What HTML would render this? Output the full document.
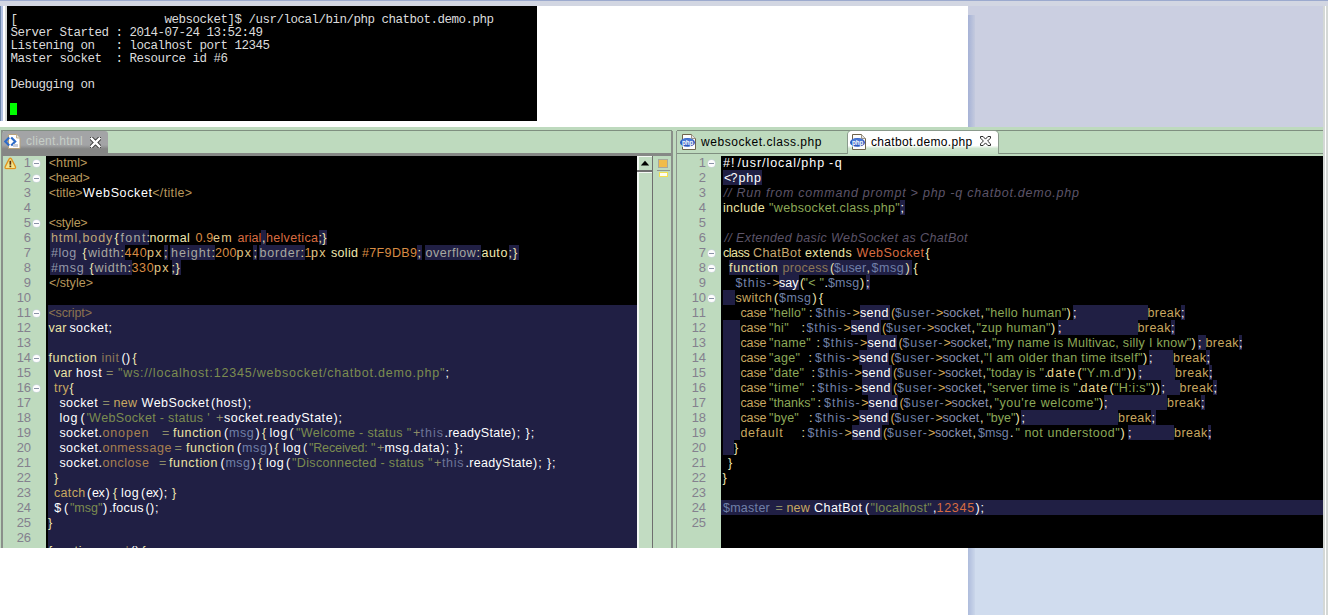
<!DOCTYPE html>
<html lang="en">
<head>
<meta charset="utf-8">
<title>WebSocket chatbot demo</title>
<style>
html,body{margin:0;padding:0}
body{width:1328px;height:615px;position:relative;overflow:hidden;background:#fff;font-family:"Liberation Sans",sans-serif;font-kerning:none}
.a,.t,.ln,.nv,.fold,i{position:absolute;display:block}
/* backdrop */
#lav1{left:968px;top:0;width:360px;height:127px;background:#cbcfe1}
#lav2{left:968px;top:548px;width:360px;height:67px;background:#d0dcee}
.shadow{left:968px;width:7px;background:linear-gradient(90deg,#a6b2d6,#c4cade)}
#topstrip{left:0;top:0;width:1328px;height:6px;background:#d2d6e2}
#topline{left:0;top:0;width:1328px;height:1px;background:#9caace}
#ls0{left:0;top:6px;width:1px;height:115px;background:#6c86aa}
#ls1{left:1px;top:6px;width:2px;height:115px;background:#b4c2e2}
#ls3{left:5px;top:6px;width:2px;height:115px;background:#d8dad8}
#redge{left:1323px;top:6px;width:5px;height:609px;background:#d4d8d6}
#redge2{left:1325px;top:6px;width:1px;height:609px;background:#fff}
/* terminal */
#term{left:7px;top:6px;width:530px;height:115px;background:#000;overflow:hidden}
#term pre{position:absolute;left:3.5px;top:7.5px;margin:0;font-family:"Liberation Mono",monospace;font-size:12.5px;line-height:13px;letter-spacing:-0.5px;color:#dcdcdc;white-space:pre}
#cursor{left:3px;top:97px;width:7px;height:12px;background:#00ff00}
/* eclipse */
#ecl{left:0;top:127px;width:1328px;height:421px;background:#bedabe;overflow:hidden}
#ecl .wrap{position:absolute;left:0;top:-127px;width:1328px;height:615px}
.code{background:#000;overflow:hidden}
.t{font-size:12.5px;line-height:15px;height:15px;white-space:pre}
.ln{font-size:13px;line-height:15px;height:15px;width:30px;text-align:right;color:#84808e;letter-spacing:-0.1px}
.nv{height:15px;background:#201f44}
.fold{width:7px;height:7px;border-radius:50%;background:#fdfdfd;box-shadow:0 0 0 0.5px #cfd6e6}
.fold:after{content:"";position:absolute;left:1px;top:3px;width:5px;height:1px;background:#8a93a8}
.tabtxt{font-size:12px;line-height:14px;white-space:pre;color:#000}
</style>
</head>
<body>
<i id="lav1"></i><i id="lav2"></i>
<i class="shadow" style="top:15px;height:112px"></i>
<i class="shadow" style="top:548px;height:67px;background:linear-gradient(90deg,#aebcdc,#cad6ea)"></i>
<i id="topstrip"></i><i id="topline"></i>
<i id="ls0"></i><i id="ls1"></i><i id="ls3"></i>
<div id="term" class="a"><pre>[                     websocket]$ /usr/local/bin/php chatbot.demo.php
Server Started : 2014-07-24 13:52:49
Listening on   : localhost port 12345
Master socket  : Resource id #6

Debugging on</pre><i id="cursor"></i></div>

<div id="ecl" class="a"><div class="wrap">
<!-- ===== left pane chrome ===== -->
<i style="left:1px;top:130px;width:2px;height:418px;background:#8a8f8a"></i>
<i style="left:3px;top:130px;width:669px;height:1px;background:#7f8f80"></i>
<i style="left:671px;top:131px;width:2px;height:417px;background:#8a908a"></i>
<i style="left:3px;top:153px;width:668px;height:3px;background:#868886"></i>
<!-- tab client.html -->
<i style="left:2px;top:131px;width:106px;height:17px;background:#a3a4a6;border-radius:3px 3px 0 0"></i>
<i style="left:2px;top:145px;width:106px;height:11px;background:linear-gradient(#a3a4a6 0,#858685 35%,#858685 100%)"></i>
<svg class="a" style="left:4px;top:133px" width="18" height="17" viewBox="0 0 18 17">
 <path d="M4.5 1.5h8l3.5 3.5v10.5h-11.5z" fill="#fff" stroke="#b9a27a" stroke-width="1"/>
 <path d="M12.5 1.5v3.5h3.5" fill="#e8e8e8" stroke="#b9a27a" stroke-width="0.8"/>
 <path d="M5.2 4.5 1.2 8.5l4 4M7.2 4.5l4 4-4 4" fill="none" stroke="#2e6cc8" stroke-width="2.2"/>
 <rect x="9" y="11" width="5" height="3" fill="#c8ccd8"/>
</svg>
<span class="a tabtxt" style="left:26px;top:134px;color:#c6cec6;letter-spacing:0.27px">client.html</span>
<svg class="a" style="left:90px;top:136.5px" width="11" height="11" viewBox="0 0 12 12">
 <path d="M1.6 1.6 10.4 10.4M10.4 1.6 1.6 10.4" stroke="#303030" stroke-width="4.6" stroke-linecap="square"/>
 <path d="M1.8 1.8 10.2 10.2M10.2 1.8 1.8 10.2" stroke="#fff" stroke-width="2.7" stroke-linecap="square"/>
</svg>
<!-- left code area -->
<div class="a code" style="left:46px;top:156px;width:591px;height:392px"></div>
<i class="nv" style="left:48px;top:305px;width:589px;height:243px"></i>
<i class="nv" style="left:50.0px;top:230px;width:99.0px"></i>
<i class="nv" style="left:261.0px;top:230px;width:5.0px"></i>
<i class="nv" style="left:318.5px;top:230px;width:8.5px"></i>
<i class="nv" style="left:50.0px;top:245px;width:74.5px"></i>
<i class="nv" style="left:164.0px;top:245px;width:4.0px"></i>
<i class="nv" style="left:170.0px;top:245px;width:45.0px"></i>
<i class="nv" style="left:253.0px;top:245px;width:4.0px"></i>
<i class="nv" style="left:259.0px;top:245px;width:45.5px"></i>
<i class="nv" style="left:417.0px;top:245px;width:5.0px"></i>
<i class="nv" style="left:425.0px;top:245px;width:55.5px"></i>
<i class="nv" style="left:508.5px;top:245px;width:10.5px"></i>
<i class="nv" style="left:50.0px;top:260px;width:81.5px"></i>
<i class="nv" style="left:171.5px;top:260px;width:9.0px"></i>
<span class="ln" style="left:1px;top:155px">1</span>
<span class="ln" style="left:1px;top:170px">2</span>
<span class="ln" style="left:1px;top:185px">3</span>
<span class="ln" style="left:1px;top:200px">4</span>
<span class="ln" style="left:1px;top:215px">5</span>
<span class="ln" style="left:1px;top:230px">6</span>
<span class="ln" style="left:1px;top:245px">7</span>
<span class="ln" style="left:1px;top:260px">8</span>
<span class="ln" style="left:1px;top:275px">9</span>
<span class="ln" style="left:1px;top:290px">10</span>
<span class="ln" style="left:1px;top:305px">11</span>
<span class="ln" style="left:1px;top:320px">12</span>
<span class="ln" style="left:1px;top:335px">13</span>
<span class="ln" style="left:1px;top:350px">14</span>
<span class="ln" style="left:1px;top:365px">15</span>
<span class="ln" style="left:1px;top:380px">16</span>
<span class="ln" style="left:1px;top:395px">17</span>
<span class="ln" style="left:1px;top:410px">18</span>
<span class="ln" style="left:1px;top:425px">19</span>
<span class="ln" style="left:1px;top:440px">20</span>
<span class="ln" style="left:1px;top:455px">21</span>
<span class="ln" style="left:1px;top:470px">22</span>
<span class="ln" style="left:1px;top:485px">23</span>
<span class="ln" style="left:1px;top:500px">24</span>
<span class="ln" style="left:1px;top:515px">25</span>
<span class="ln" style="left:1px;top:530px">26</span>
<span class="ln" style="left:1px;top:545px">27</span>
<i class="fold" style="left:33.0px;top:160.0px"></i>
<i class="fold" style="left:33.0px;top:175.0px"></i>
<i class="fold" style="left:33.0px;top:220.0px"></i>
<i class="fold" style="left:33.0px;top:310.0px"></i>
<i class="fold" style="left:33.0px;top:355.0px"></i>
<i class="fold" style="left:33.0px;top:385.0px"></i>
<!-- warning icon -->
<svg class="a" style="left:4px;top:157px" width="13" height="13" viewBox="0 0 13 13">
 <path d="M5.2 1.9Q6.3 0.6 7.4 1.9L11.4 9.6Q12 11.6 10.2 11.6H2.4Q0.6 11.6 1.2 9.6Z" fill="#fff" opacity="0.7" transform="translate(0,0.7)"/>
 <path d="M5.2 1.9Q6.3 0.6 7.4 1.9L11.4 9.6Q12 11.6 10.2 11.6H2.4Q0.6 11.6 1.2 9.6Z" fill="#f2e48c" stroke="#e0921e" stroke-width="1.3" stroke-linejoin="round"/>
 <rect x="5.5" y="3.8" width="1.7" height="3.9" fill="#5c2c08"/><rect x="5.5" y="8.5" width="1.7" height="1.7" fill="#5c2c08"/>
</svg>
<span class="t" style="left:48.7px;top:156px;color:#b8985c;letter-spacing:0.10px">&lt;html&gt;</span>
<span class="t" style="left:48.7px;top:171px;color:#b8985c;letter-spacing:-0.25px">&lt;head&gt;</span>
<span class="t" style="left:48.7px;top:186px;color:#b8985c;letter-spacing:-0.02px">&lt;title&gt;</span>
<span class="t" style="left:83.1px;top:186px;color:#ffffff;letter-spacing:0.62px">WebSocket</span>
<span class="t" style="left:152.2px;top:186px;color:#b8985c;letter-spacing:0.35px">&lt;/title&gt;</span>
<span class="t" style="left:48.7px;top:216px;color:#b8985c;letter-spacing:-0.22px">&lt;style&gt;</span>
<span class="t" style="left:50.9px;top:231px;color:#c0a878;letter-spacing:0.90px">html,body</span>
<span class="t" style="left:114.4px;top:231px;color:#f0e8b0;letter-spacing:0.00px">{</span>
<span class="t" style="left:120.4px;top:231px;color:#a8a8a0;letter-spacing:1.40px">font</span>
<span class="t" style="left:146.4px;top:231px;color:#f0e8b0;letter-spacing:0.00px">:</span>
<span class="t" style="left:149.4px;top:231px;color:#f0e8b0;letter-spacing:0.46px">normal</span>
<span class="t" style="left:195.4px;top:231px;color:#d88c44;letter-spacing:0.20px">0.9</span>
<span class="t" style="left:212.9px;top:231px;color:#e0c888;letter-spacing:1.40px">em</span>
<span class="t" style="left:237.4px;top:231px;color:#d86c40;letter-spacing:0.07px">arial</span>
<span class="t" style="left:261.9px;top:231px;color:#f0e8b0;letter-spacing:0.00px">,</span>
<span class="t" style="left:265.9px;top:231px;color:#d86c40;letter-spacing:0.35px">helvetica</span>
<span class="t" style="left:318.4px;top:231px;color:#f0e8b0;letter-spacing:0.42px">;}</span>
<span class="t" style="left:50.9px;top:246px;color:#9498a8;letter-spacing:0.59px">#log</span>
<span class="t" style="left:82.4px;top:246px;color:#f0e8b0;letter-spacing:0.00px">{</span>
<span class="t" style="left:87.9px;top:246px;color:#a8a8a0;letter-spacing:0.66px">width</span>
<span class="t" style="left:120.4px;top:246px;color:#f0e8b0;letter-spacing:0.00px">:</span>
<span class="t" style="left:124.4px;top:246px;color:#d88c44;letter-spacing:0.71px">440</span>
<span class="t" style="left:146.9px;top:246px;color:#e0c888;letter-spacing:1.40px">px</span>
<span class="t" style="left:163.9px;top:246px;color:#f0e8b0;letter-spacing:0.00px">;</span>
<span class="t" style="left:170.9px;top:246px;color:#a8a8a0;letter-spacing:1.07px">height</span>
<span class="t" style="left:211.4px;top:246px;color:#f0e8b0;letter-spacing:0.00px">:</span>
<span class="t" style="left:214.9px;top:246px;color:#d88c44;letter-spacing:0.38px">200</span>
<span class="t" style="left:236.4px;top:246px;color:#e0c888;letter-spacing:1.40px">px</span>
<span class="t" style="left:253.4px;top:246px;color:#f0e8b0;letter-spacing:0.00px">;</span>
<span class="t" style="left:259.4px;top:246px;color:#a8a8a0;letter-spacing:0.81px">border</span>
<span class="t" style="left:300.4px;top:246px;color:#f0e8b0;letter-spacing:0.00px">:</span>
<span class="t" style="left:304.4px;top:246px;color:#d88c44;letter-spacing:0.00px">1</span>
<span class="t" style="left:310.9px;top:246px;color:#e0c888;letter-spacing:1.40px">px</span>
<span class="t" style="left:330.9px;top:246px;color:#f0e8b0;letter-spacing:0.36px">solid</span>
<span class="t" style="left:361.9px;top:246px;color:#d88c44;letter-spacing:0.38px">#7F9DB9</span>
<span class="t" style="left:417.4px;top:246px;color:#f0e8b0;letter-spacing:0.00px">;</span>
<span class="t" style="left:425.4px;top:246px;color:#a8a8a0;letter-spacing:0.56px">overflow</span>
<span class="t" style="left:476.4px;top:246px;color:#f0e8b0;letter-spacing:0.00px">:</span>
<span class="t" style="left:481.4px;top:246px;color:#f0e8b0;letter-spacing:0.54px">auto</span>
<span class="t" style="left:508.4px;top:246px;color:#f0e8b0;letter-spacing:1.17px">;}</span>
<span class="t" style="left:50.9px;top:261px;color:#9498a8;letter-spacing:0.73px">#msg</span>
<span class="t" style="left:89.4px;top:261px;color:#f0e8b0;letter-spacing:0.00px">{</span>
<span class="t" style="left:94.4px;top:261px;color:#a8a8a0;letter-spacing:0.76px">width</span>
<span class="t" style="left:127.4px;top:261px;color:#f0e8b0;letter-spacing:0.00px">:</span>
<span class="t" style="left:131.4px;top:261px;color:#d88c44;letter-spacing:0.71px">330</span>
<span class="t" style="left:153.9px;top:261px;color:#e0c888;letter-spacing:1.40px">px</span>
<span class="t" style="left:171.4px;top:261px;color:#f0e8b0;letter-spacing:0.67px">;}</span>
<span class="t" style="left:48.9px;top:276px;color:#b8985c;letter-spacing:0.05px">&lt;/style&gt;</span>
<span class="t" style="left:48.4px;top:306px;color:#8c7450;letter-spacing:-0.12px">&lt;script&gt;</span>
<span class="t" style="left:48.4px;top:321px;color:#ece4a4;letter-spacing:0.38px">var</span>
<span class="t" style="left:69.4px;top:321px;color:#ffffff;letter-spacing:0.48px">socket</span>
<span class="t" style="left:108.4px;top:321px;color:#ffffff;letter-spacing:0.00px">;</span>
<span class="t" style="left:48.4px;top:351px;color:#ece4a4;letter-spacing:0.65px">function</span>
<span class="t" style="left:101.4px;top:351px;color:#8c7858;letter-spacing:0.50px">init</span>
<span class="t" style="left:121.4px;top:351px;color:#ffffff;letter-spacing:0.34px">()</span>
<span class="t" style="left:132.4px;top:351px;color:#f0e8b0;letter-spacing:0.00px">{</span>
<span class="t" style="left:53.9px;top:366px;color:#ece4a4;letter-spacing:0.38px">var</span>
<span class="t" style="left:75.9px;top:366px;color:#ffffff;letter-spacing:0.71px">host</span>
<span class="t" style="left:105.9px;top:366px;color:#8c8c68;letter-spacing:0.00px">=</span>
<span class="t" style="left:117.9px;top:366px;color:#7c8c50;letter-spacing:0.80px">&quot;ws://localhost:12345/websocket/chatbot.demo.php&quot;</span>
<span class="t" style="left:445.4px;top:366px;color:#ffffff;letter-spacing:0.00px">;</span>
<span class="t" style="left:53.9px;top:381px;color:#c8a860;letter-spacing:0.54px">try</span>
<span class="t" style="left:69.4px;top:381px;color:#f0e8b0;letter-spacing:0.00px">{</span>
<span class="t" style="left:59.4px;top:396px;color:#ffffff;letter-spacing:0.43px">socket</span>
<span class="t" style="left:102.4px;top:396px;color:#8c8c68;letter-spacing:0.00px">=</span>
<span class="t" style="left:113.4px;top:396px;color:#c8a860;letter-spacing:0.35px">new</span>
<span class="t" style="left:141.4px;top:396px;color:#ffffff;letter-spacing:0.45px">WebSocket</span>
<span class="t" style="left:210.9px;top:396px;color:#ffffff;letter-spacing:0.00px">(</span>
<span class="t" style="left:215.9px;top:396px;color:#ffffff;letter-spacing:0.59px">host</span>
<span class="t" style="left:242.4px;top:396px;color:#ffffff;letter-spacing:1.18px">);</span>
<span class="t" style="left:59.4px;top:411px;color:#ffffff;letter-spacing:0.67px">log</span>
<span class="t" style="left:80.4px;top:411px;color:#ffffff;letter-spacing:0.00px">(</span>
<span class="t" style="left:86.4px;top:411px;color:#7c8c50;letter-spacing:0.33px">&#x27;WebSocket - status &#x27;</span>
<span class="t" style="left:215.9px;top:411px;color:#8c8c68;letter-spacing:0.00px">+</span>
<span class="t" style="left:223.9px;top:411px;color:#ffffff;letter-spacing:0.54px">socket.readyState</span>
<span class="t" style="left:333.4px;top:411px;color:#ffffff;letter-spacing:1.03px">);</span>
<span class="t" style="left:59.4px;top:426px;color:#ffffff;letter-spacing:0.48px">socket.</span>
<span class="t" style="left:102.4px;top:426px;color:#a88050;letter-spacing:0.88px">onopen</span>
<span class="t" style="left:162.1px;top:426px;color:#8c8c68;letter-spacing:0.00px">=</span>
<span class="t" style="left:172.9px;top:426px;color:#ece4a4;letter-spacing:0.65px">function</span>
<span class="t" style="left:223.9px;top:426px;color:#ffffff;letter-spacing:0.00px">(</span>
<span class="t" style="left:228.9px;top:426px;color:#7080a8;letter-spacing:0.62px">msg</span>
<span class="t" style="left:255.4px;top:426px;color:#ffffff;letter-spacing:0.00px">)</span>
<span class="t" style="left:262.1px;top:426px;color:#f0e8b0;letter-spacing:0.00px">{</span>
<span class="t" style="left:269.4px;top:426px;color:#ffffff;letter-spacing:0.67px">log</span>
<span class="t" style="left:289.4px;top:426px;color:#ffffff;letter-spacing:0.00px">(</span>
<span class="t" style="left:295.9px;top:426px;color:#7c8c50;letter-spacing:0.35px">&quot;Welcome - status &quot;</span>
<span class="t" style="left:413.1px;top:426px;color:#8c8c68;letter-spacing:0.00px">+</span>
<span class="t" style="left:420.4px;top:426px;color:#6c7498;letter-spacing:1.06px">this</span>
<span class="t" style="left:444.4px;top:426px;color:#ffffff;letter-spacing:0.28px">.readyState</span>
<span class="t" style="left:511.4px;top:426px;color:#ffffff;letter-spacing:1.18px">);</span>
<span class="t" style="left:525.4px;top:426px;color:#ffffff;letter-spacing:1.17px">};</span>
<span class="t" style="left:59.4px;top:441px;color:#ffffff;letter-spacing:0.48px">socket.</span>
<span class="t" style="left:102.4px;top:441px;color:#a88050;letter-spacing:0.54px">onmessage</span>
<span class="t" style="left:174.4px;top:441px;color:#8c8c68;letter-spacing:0.00px">=</span>
<span class="t" style="left:185.9px;top:441px;color:#ece4a4;letter-spacing:0.65px">function</span>
<span class="t" style="left:237.1px;top:441px;color:#ffffff;letter-spacing:0.00px">(</span>
<span class="t" style="left:242.1px;top:441px;color:#7080a8;letter-spacing:0.56px">msg</span>
<span class="t" style="left:268.4px;top:441px;color:#ffffff;letter-spacing:0.00px">)</span>
<span class="t" style="left:274.4px;top:441px;color:#f0e8b0;letter-spacing:0.00px">{</span>
<span class="t" style="left:282.9px;top:441px;color:#ffffff;letter-spacing:0.60px">log</span>
<span class="t" style="left:302.9px;top:441px;color:#ffffff;letter-spacing:0.00px">(</span>
<span class="t" style="left:308.9px;top:441px;color:#7c8c50;letter-spacing:-0.12px">&quot;Received: &quot;</span>
<span class="t" style="left:376.9px;top:441px;color:#8c8c68;letter-spacing:0.00px">+</span>
<span class="t" style="left:384.4px;top:441px;color:#ffffff;letter-spacing:0.57px">msg.data</span>
<span class="t" style="left:440.4px;top:441px;color:#ffffff;letter-spacing:1.18px">);</span>
<span class="t" style="left:454.4px;top:441px;color:#ffffff;letter-spacing:1.02px">};</span>
<span class="t" style="left:59.4px;top:456px;color:#ffffff;letter-spacing:0.48px">socket.</span>
<span class="t" style="left:102.4px;top:456px;color:#a88050;letter-spacing:0.56px">onclose</span>
<span class="t" style="left:158.9px;top:456px;color:#8c8c68;letter-spacing:0.00px">=</span>
<span class="t" style="left:168.9px;top:456px;color:#ece4a4;letter-spacing:0.68px">function</span>
<span class="t" style="left:220.4px;top:456px;color:#ffffff;letter-spacing:0.00px">(</span>
<span class="t" style="left:225.4px;top:456px;color:#7080a8;letter-spacing:0.46px">msg</span>
<span class="t" style="left:251.4px;top:456px;color:#ffffff;letter-spacing:0.00px">)</span>
<span class="t" style="left:257.9px;top:456px;color:#f0e8b0;letter-spacing:0.00px">{</span>
<span class="t" style="left:265.9px;top:456px;color:#ffffff;letter-spacing:0.60px">log</span>
<span class="t" style="left:285.9px;top:456px;color:#ffffff;letter-spacing:0.00px">(</span>
<span class="t" style="left:292.1px;top:456px;color:#7c8c50;letter-spacing:0.34px">&quot;Disconnected - status &quot;</span>
<span class="t" style="left:433.9px;top:456px;color:#8c8c68;letter-spacing:0.00px">+</span>
<span class="t" style="left:441.9px;top:456px;color:#6c7498;letter-spacing:0.69px">this</span>
<span class="t" style="left:465.4px;top:456px;color:#ffffff;letter-spacing:0.32px">.readyState</span>
<span class="t" style="left:532.9px;top:456px;color:#ffffff;letter-spacing:1.18px">);</span>
<span class="t" style="left:546.9px;top:456px;color:#ffffff;letter-spacing:0.92px">};</span>
<span class="t" style="left:53.9px;top:471px;color:#f0e8b0;letter-spacing:0.00px">}</span>
<span class="t" style="left:53.9px;top:486px;color:#c8a860;letter-spacing:0.36px">catch</span>
<span class="t" style="left:87.1px;top:486px;color:#ffffff;letter-spacing:0.00px">(</span>
<span class="t" style="left:92.1px;top:486px;color:#ffffff;letter-spacing:-0.45px">ex</span>
<span class="t" style="left:105.4px;top:486px;color:#ffffff;letter-spacing:0.00px">)</span>
<span class="t" style="left:112.9px;top:486px;color:#f0e8b0;letter-spacing:0.00px">{</span>
<span class="t" style="left:120.9px;top:486px;color:#ffffff;letter-spacing:0.60px">log</span>
<span class="t" style="left:140.9px;top:486px;color:#ffffff;letter-spacing:0.00px">(</span>
<span class="t" style="left:145.9px;top:486px;color:#ffffff;letter-spacing:-0.35px">ex</span>
<span class="t" style="left:158.9px;top:486px;color:#ffffff;letter-spacing:0.78px">);</span>
<span class="t" style="left:172.1px;top:486px;color:#f0e8b0;letter-spacing:0.00px">}</span>
<span class="t" style="left:54.2px;top:501px;color:#ffffff;letter-spacing:0.00px">$</span>
<span class="t" style="left:64.1px;top:501px;color:#ffffff;letter-spacing:0.00px">(</span>
<span class="t" style="left:69.9px;top:501px;color:#7c8c50;letter-spacing:0.00px">&quot;msg&quot;</span>
<span class="t" style="left:103.0px;top:501px;color:#ffffff;letter-spacing:0.00px">)</span>
<span class="t" style="left:108.9px;top:501px;color:#ffffff;letter-spacing:0.26px">.focus</span>
<span class="t" style="left:145.4px;top:501px;color:#ffffff;letter-spacing:0.34px">()</span>
<span class="t" style="left:154.9px;top:501px;color:#ffffff;letter-spacing:0.00px">;</span>
<span class="t" style="left:47.9px;top:516px;color:#f0e8b0;letter-spacing:0.00px">}</span>
<span class="t" style="left:48.4px;top:544px;color:#ece4a4;letter-spacing:0.65px">function</span>
<span class="t" style="left:101.4px;top:544px;color:#8c7858;letter-spacing:-0.03px">send</span>
<span class="t" style="left:130.4px;top:544px;color:#ffffff;letter-spacing:0.34px">()</span>
<span class="t" style="left:141.4px;top:544px;color:#f0e8b0;letter-spacing:0.00px">{</span>
<!-- scrollbar -->
<i style="left:637px;top:156px;width:16px;height:392px;background:#c2dcc2"></i>
<i style="left:637px;top:156px;width:2px;height:392px;background:#f4f8f4"></i>
<i style="left:652px;top:156px;width:1px;height:392px;background:#6e6e6e"></i>
<i style="left:637px;top:156px;width:15px;height:1px;background:#f4f8f4"></i>
<i style="left:637px;top:170px;width:16px;height:2px;background:#707070"></i>
<i style="left:639px;top:172px;width:13px;height:1px;background:#f4f8f4"></i>
<svg class="a" style="left:640px;top:160px" width="10" height="7" viewBox="0 0 10 7"><path d="M5 0.8 9.2 5.6H0.8z" fill="#000"/></svg>
<!-- overview ruler -->
<i style="left:659px;top:160px;width:8px;height:7px;background:#f0bc48;box-shadow:0 0 0 1px #a8a89c"></i>
<i style="left:657px;top:170px;width:13px;height:1px;background:#8f958f"></i>
<i style="left:659px;top:172px;width:9px;height:5px;background:#fffdf0;box-shadow:inset 0 0 0 1px #f4e050"></i>

<!-- ===== right pane chrome ===== -->
<i style="left:676px;top:131px;width:1px;height:417px;background:#8c948c"></i>
<i style="left:677px;top:130px;width:646px;height:1px;background:#7f8f80"></i>
<i style="left:677px;top:153px;width:646px;height:1px;background:#7f8f80"></i>
<!-- inactive tab -->
<svg class="a" style="left:680px;top:133px" width="18" height="18" viewBox="0 0 18 18">
 <path d="M2.5 1.5h9l4 4v11h-13z" fill="#fdfdfd" stroke="#6e624c" stroke-width="1"/>
 <path d="M11.5 1.5v4h4" fill="#e4e4e4" stroke="#8a7e68" stroke-width="0.8"/>
 <ellipse cx="7.5" cy="9.4" rx="7.5" ry="4.4" fill="#2c58c0"/>
 <ellipse cx="7.5" cy="7.6" rx="6" ry="2.2" fill="#5c8ce0" opacity="0.6"/>
 <text x="7.6" y="11.6" text-anchor="middle" font-family="Liberation Sans, sans-serif" font-weight="bold" font-size="7.6" textLength="11.4" lengthAdjust="spacingAndGlyphs" fill="#fff">php</text>
</svg>
<span class="a tabtxt" style="left:701px;top:135px;letter-spacing:0.54px">websocket.class.php</span>
<!-- active tab -->
<i style="left:848px;top:131px;width:150px;height:25px;background:linear-gradient(#ffffff 0,#ffffff 58%,#cfe6cf 70%,#bedabe 100%);border-radius:4px 4px 0 0;box-shadow:0 0 0 1px #8a9a8c"></i>
<i style="left:847px;top:154px;width:152px;height:2px;background:#bedabe"></i>
<svg class="a" style="left:850px;top:133px" width="18" height="18" viewBox="0 0 18 18">
 <path d="M2.5 1.5h9l4 4v11h-13z" fill="#fdfdfd" stroke="#6e624c" stroke-width="1"/>
 <path d="M11.5 1.5v4h4" fill="#e4e4e4" stroke="#8a7e68" stroke-width="0.8"/>
 <ellipse cx="7.5" cy="9.4" rx="7.5" ry="4.4" fill="#2c58c0"/>
 <ellipse cx="7.5" cy="7.6" rx="6" ry="2.2" fill="#5c8ce0" opacity="0.6"/>
 <text x="7.6" y="11.6" text-anchor="middle" font-family="Liberation Sans, sans-serif" font-weight="bold" font-size="7.6" textLength="11.4" lengthAdjust="spacingAndGlyphs" fill="#fff">php</text>
</svg>
<span class="a tabtxt" style="left:871px;top:135px;letter-spacing:0.34px">chatbot.demo.php</span>
<svg class="a" style="left:979px;top:135px" width="13" height="12" viewBox="0 0 13 12">
 <path d="M1.5 1.5h2.6l2.4 2.6 2.4-2.6h2.6v1.6L8.6 6l2.9 2.9v1.6H8.9L6.5 7.9 4.1 10.5H1.5V8.9L4.4 6 1.5 3.1z" fill="#fdfdfd" stroke="#2c2c2c" stroke-width="1"/>
</svg>
<!-- right code area -->
<div class="a code" style="left:721px;top:156px;width:602px;height:392px"></div>
<i class="nv" style="left:723.0px;top:170px;width:39.0px"></i>
<i class="nv" style="left:900.0px;top:200px;width:4.5px"></i>
<i class="nv" style="left:729.0px;top:260px;width:183.0px"></i>
<i class="nv" style="left:779.0px;top:275px;width:20.0px"></i>
<i class="nv" style="left:865.5px;top:275px;width:4.5px"></i>
<i class="nv" style="left:723.0px;top:290px;width:12.0px"></i>
<i class="nv" style="left:859.5px;top:305px;width:30.0px"></i>
<i class="nv" style="left:1072.5px;top:305px;width:75.0px"></i>
<i class="nv" style="left:1180.5px;top:305px;width:4.0px"></i>
<i class="nv" style="left:723.0px;top:320px;width:17.0px"></i>
<i class="nv" style="left:850.5px;top:320px;width:30.0px"></i>
<i class="nv" style="left:1057.5px;top:320px;width:80.0px"></i>
<i class="nv" style="left:1170.5px;top:320px;width:4.0px"></i>
<i class="nv" style="left:723.0px;top:335px;width:17.0px"></i>
<i class="nv" style="left:867.0px;top:335px;width:30.0px"></i>
<i class="nv" style="left:1197.5px;top:335px;width:8.0px"></i>
<i class="nv" style="left:1238.7px;top:335px;width:3.8px"></i>
<i class="nv" style="left:723.0px;top:350px;width:17.0px"></i>
<i class="nv" style="left:859.0px;top:350px;width:30.0px"></i>
<i class="nv" style="left:1148.5px;top:350px;width:24.7px"></i>
<i class="nv" style="left:1206.0px;top:350px;width:4.0px"></i>
<i class="nv" style="left:723.0px;top:365px;width:17.0px"></i>
<i class="nv" style="left:861.5px;top:365px;width:30.0px"></i>
<i class="nv" style="left:1138.0px;top:365px;width:37.0px"></i>
<i class="nv" style="left:1208.7px;top:365px;width:3.8px"></i>
<i class="nv" style="left:723.0px;top:380px;width:17.0px"></i>
<i class="nv" style="left:861.5px;top:380px;width:30.0px"></i>
<i class="nv" style="left:1161.0px;top:380px;width:18.5px"></i>
<i class="nv" style="left:1213.0px;top:380px;width:4.0px"></i>
<i class="nv" style="left:723.0px;top:395px;width:17.0px"></i>
<i class="nv" style="left:868.2px;top:395px;width:30.0px"></i>
<i class="nv" style="left:1103.7px;top:395px;width:63.3px"></i>
<i class="nv" style="left:1200.5px;top:395px;width:4.5px"></i>
<i class="nv" style="left:723.0px;top:410px;width:17.0px"></i>
<i class="nv" style="left:859.0px;top:410px;width:30.0px"></i>
<i class="nv" style="left:1021.0px;top:410px;width:97.2px"></i>
<i class="nv" style="left:1151.0px;top:410px;width:4.5px"></i>
<i class="nv" style="left:723.0px;top:425px;width:17.0px"></i>
<i class="nv" style="left:851.5px;top:425px;width:30.0px"></i>
<i class="nv" style="left:1127.5px;top:425px;width:46.5px"></i>
<i class="nv" style="left:1207.5px;top:425px;width:3.5px"></i>
<i class="nv" style="left:723.0px;top:440px;width:10.5px"></i>
<i class="nv" style="left:721.0px;top:500px;width:602.0px"></i>
<span class="ln" style="left:676px;top:155px">1</span>
<span class="ln" style="left:676px;top:170px">2</span>
<span class="ln" style="left:676px;top:185px">3</span>
<span class="ln" style="left:676px;top:200px">4</span>
<span class="ln" style="left:676px;top:215px">5</span>
<span class="ln" style="left:676px;top:230px">6</span>
<span class="ln" style="left:676px;top:245px">7</span>
<span class="ln" style="left:676px;top:260px">8</span>
<span class="ln" style="left:676px;top:275px">9</span>
<span class="ln" style="left:676px;top:290px">10</span>
<span class="ln" style="left:676px;top:305px">11</span>
<span class="ln" style="left:676px;top:320px">12</span>
<span class="ln" style="left:676px;top:335px">13</span>
<span class="ln" style="left:676px;top:350px">14</span>
<span class="ln" style="left:676px;top:365px">15</span>
<span class="ln" style="left:676px;top:380px">16</span>
<span class="ln" style="left:676px;top:395px">17</span>
<span class="ln" style="left:676px;top:410px">18</span>
<span class="ln" style="left:676px;top:425px">19</span>
<span class="ln" style="left:676px;top:440px">20</span>
<span class="ln" style="left:676px;top:455px">21</span>
<span class="ln" style="left:676px;top:470px">22</span>
<span class="ln" style="left:676px;top:485px">23</span>
<span class="ln" style="left:676px;top:500px">24</span>
<span class="ln" style="left:676px;top:515px">25</span>
<i class="fold" style="left:708.0px;top:160.0px"></i>
<i class="fold" style="left:708.0px;top:250.0px"></i>
<i class="fold" style="left:708.0px;top:265.0px"></i>
<i class="fold" style="left:708.0px;top:295.0px"></i>
<span class="t" style="left:722.9px;top:156px;color:#ffffff;letter-spacing:1.28px">#!</span>
<span class="t" style="left:737.4px;top:156px;color:#ffffff;letter-spacing:0.95px">/usr/local/php</span>
<span class="t" style="left:829.1px;top:156px;color:#ffffff;letter-spacing:1.40px">-q</span>
<span class="t" style="left:723.9px;top:171px;color:#ffffff;letter-spacing:-0.60px">&lt;?</span>
<span class="t" style="left:738.4px;top:171px;color:#ffffff;letter-spacing:0.88px">php</span>
<span class="t" style="left:723.8px;top:186px;color:#5c5468;letter-spacing:0.77px;font-style:italic">// Run from command prompt &gt; php -q chatbot.demo.php</span>
<span class="t" style="left:722.9px;top:201px;color:#ece4a4;letter-spacing:0.37px">include</span>
<span class="t" style="left:769.1px;top:201px;color:#8ca858;letter-spacing:0.32px">&quot;websocket.class.php&quot;</span>
<span class="t" style="left:900.4px;top:201px;color:#ffffff;letter-spacing:0.00px">;</span>
<span class="t" style="left:724.5px;top:231px;color:#5c5468;letter-spacing:0.39px;font-style:italic">// Extended basic WebSocket as ChatBot</span>
<span class="t" style="left:722.9px;top:246px;color:#ece4a4;letter-spacing:-0.40px">class</span>
<span class="t" style="left:752.9px;top:246px;color:#c8a870;letter-spacing:0.48px">ChatBot</span>
<span class="t" style="left:804.9px;top:246px;color:#ece4a4;letter-spacing:0.53px">extends</span>
<span class="t" style="left:856.4px;top:246px;color:#d86c40;letter-spacing:0.45px">WebSocket</span>
<span class="t" style="left:925.4px;top:246px;color:#f0e8b0;letter-spacing:0.00px">{</span>
<span class="t" style="left:729.1px;top:261px;color:#ece4a4;letter-spacing:0.69px">function</span>
<span class="t" style="left:782.4px;top:261px;color:#8c7858;letter-spacing:0.32px">process</span>
<span class="t" style="left:829.9px;top:261px;color:#f0e8b0;letter-spacing:0.00px">(</span>
<span class="t" style="left:834.1px;top:261px;color:#7080a8;letter-spacing:0.20px">$user</span>
<span class="t" style="left:866.4px;top:261px;color:#f0e8b0;letter-spacing:0.00px">,</span>
<span class="t" style="left:871.4px;top:261px;color:#7080a8;letter-spacing:0.61px">$msg</span>
<span class="t" style="left:905.4px;top:261px;color:#f0e8b0;letter-spacing:0.00px">)</span>
<span class="t" style="left:913.4px;top:261px;color:#f0e8b0;letter-spacing:0.00px">{</span>
<span class="t" style="left:735.4px;top:276px;color:#7080a8;letter-spacing:0.99px">$this-</span>
<span class="t" style="left:772.4px;top:276px;color:#d8ac58;letter-spacing:0.00px">&gt;</span>
<span class="t" style="left:779.1px;top:276px;color:#ffffff;letter-spacing:-0.05px">say</span>
<span class="t" style="left:799.9px;top:276px;color:#f0e8b0;letter-spacing:0.00px">(</span>
<span class="t" style="left:803.4px;top:276px;color:#8ca858;letter-spacing:0.34px">&quot;&lt; &quot;</span>
<span class="t" style="left:824.4px;top:276px;color:#ffffff;letter-spacing:0.00px">.</span>
<span class="t" style="left:827.9px;top:276px;color:#7080a8;letter-spacing:0.23px">$msg</span>
<span class="t" style="left:859.9px;top:276px;color:#f0e8b0;letter-spacing:0.00px">)</span>
<span class="t" style="left:865.9px;top:276px;color:#ffffff;letter-spacing:0.00px">;</span>
<span class="t" style="left:735.4px;top:291px;color:#c8a860;letter-spacing:0.38px">switch</span>
<span class="t" style="left:774.1px;top:291px;color:#f0e8b0;letter-spacing:0.00px">(</span>
<span class="t" style="left:779.1px;top:291px;color:#7080a8;letter-spacing:0.43px">$msg</span>
<span class="t" style="left:812.4px;top:291px;color:#f0e8b0;letter-spacing:0.00px">)</span>
<span class="t" style="left:819.1px;top:291px;color:#f0e8b0;letter-spacing:0.00px">{</span>
<span class="t" style="left:740.4px;top:306px;color:#c8a860;letter-spacing:-0.10px">case</span>
<span class="t" style="left:769.1px;top:306px;color:#8ca858;letter-spacing:0.21px">&quot;hello&quot;</span>
<span class="t" style="left:809.1px;top:306px;color:#f0e8b0;letter-spacing:0.00px">:</span>
<span class="t" style="left:815.4px;top:306px;color:#7080a8;letter-spacing:0.99px">$this-</span>
<span class="t" style="left:852.6px;top:306px;color:#d8ac58;letter-spacing:0.00px">&gt;</span>
<span class="t" style="left:859.9px;top:306px;color:#ffffff;letter-spacing:0.47px">send</span>
<span class="t" style="left:890.9px;top:306px;color:#d8ac58;letter-spacing:0.00px">(</span>
<span class="t" style="left:894.9px;top:306px;color:#7080a8;letter-spacing:0.93px">$user-</span>
<span class="t" style="left:936.1px;top:306px;color:#d8ac58;letter-spacing:0.00px">&gt;</span>
<span class="t" style="left:942.9px;top:306px;color:#8890b0;letter-spacing:0.14px">socket</span>
<span class="t" style="left:980.4px;top:306px;color:#f0e8b0;letter-spacing:0.00px">,</span>
<span class="t" style="left:985.4px;top:306px;color:#8ca858;letter-spacing:0.31px">&quot;hello human&quot;</span>
<span class="t" style="left:1066.4px;top:306px;color:#f0e8b0;letter-spacing:0.00px">)</span>
<span class="t" style="left:1072.9px;top:306px;color:#ffffff;letter-spacing:0.00px">;</span>
<span class="t" style="left:1147.4px;top:306px;color:#c8a860;letter-spacing:0.44px">break</span>
<span class="t" style="left:1180.9px;top:306px;color:#ffffff;letter-spacing:0.00px">;</span>
<span class="t" style="left:740.4px;top:321px;color:#c8a860;letter-spacing:-0.10px">case</span>
<span class="t" style="left:769.1px;top:321px;color:#8ca858;letter-spacing:0.30px">&quot;hi&quot;</span>
<span class="t" style="left:801.4px;top:321px;color:#f0e8b0;letter-spacing:0.00px">:</span>
<span class="t" style="left:806.4px;top:321px;color:#7080a8;letter-spacing:0.99px">$this-</span>
<span class="t" style="left:843.6px;top:321px;color:#d8ac58;letter-spacing:0.00px">&gt;</span>
<span class="t" style="left:850.9px;top:321px;color:#ffffff;letter-spacing:0.47px">send</span>
<span class="t" style="left:881.9px;top:321px;color:#d8ac58;letter-spacing:0.00px">(</span>
<span class="t" style="left:885.9px;top:321px;color:#7080a8;letter-spacing:0.93px">$user-</span>
<span class="t" style="left:927.1px;top:321px;color:#d8ac58;letter-spacing:0.00px">&gt;</span>
<span class="t" style="left:933.9px;top:321px;color:#8890b0;letter-spacing:0.14px">socket</span>
<span class="t" style="left:971.4px;top:321px;color:#f0e8b0;letter-spacing:0.00px">,</span>
<span class="t" style="left:976.4px;top:321px;color:#8ca858;letter-spacing:0.34px">&quot;zup human&quot;</span>
<span class="t" style="left:1050.9px;top:321px;color:#f0e8b0;letter-spacing:0.00px">)</span>
<span class="t" style="left:1057.9px;top:321px;color:#ffffff;letter-spacing:0.00px">;</span>
<span class="t" style="left:1137.4px;top:321px;color:#c8a860;letter-spacing:0.44px">break</span>
<span class="t" style="left:1170.9px;top:321px;color:#ffffff;letter-spacing:0.00px">;</span>
<span class="t" style="left:740.4px;top:336px;color:#c8a860;letter-spacing:-0.10px">case</span>
<span class="t" style="left:769.1px;top:336px;color:#8ca858;letter-spacing:0.27px">&quot;name&quot;</span>
<span class="t" style="left:816.4px;top:336px;color:#f0e8b0;letter-spacing:0.00px">:</span>
<span class="t" style="left:822.9px;top:336px;color:#7080a8;letter-spacing:0.99px">$this-</span>
<span class="t" style="left:860.1px;top:336px;color:#d8ac58;letter-spacing:0.00px">&gt;</span>
<span class="t" style="left:867.4px;top:336px;color:#ffffff;letter-spacing:0.47px">send</span>
<span class="t" style="left:898.4px;top:336px;color:#d8ac58;letter-spacing:0.00px">(</span>
<span class="t" style="left:902.4px;top:336px;color:#7080a8;letter-spacing:0.93px">$user-</span>
<span class="t" style="left:943.6px;top:336px;color:#d8ac58;letter-spacing:0.00px">&gt;</span>
<span class="t" style="left:950.4px;top:336px;color:#8890b0;letter-spacing:0.14px">socket</span>
<span class="t" style="left:987.9px;top:336px;color:#f0e8b0;letter-spacing:0.00px">,</span>
<span class="t" style="left:991.9px;top:336px;color:#8ca858;letter-spacing:0.29px">&quot;my name is Multivac, silly I know&quot;</span>
<span class="t" style="left:1191.4px;top:336px;color:#f0e8b0;letter-spacing:0.00px">)</span>
<span class="t" style="left:1197.9px;top:336px;color:#ffffff;letter-spacing:0.00px">;</span>
<span class="t" style="left:1205.4px;top:336px;color:#c8a860;letter-spacing:0.48px">break</span>
<span class="t" style="left:1239.1px;top:336px;color:#ffffff;letter-spacing:0.00px">;</span>
<span class="t" style="left:740.4px;top:351px;color:#c8a860;letter-spacing:-0.10px">case</span>
<span class="t" style="left:769.1px;top:351px;color:#8ca858;letter-spacing:0.25px">&quot;age&quot;</span>
<span class="t" style="left:808.4px;top:351px;color:#f0e8b0;letter-spacing:0.00px">:</span>
<span class="t" style="left:814.9px;top:351px;color:#7080a8;letter-spacing:0.99px">$this-</span>
<span class="t" style="left:852.1px;top:351px;color:#d8ac58;letter-spacing:0.00px">&gt;</span>
<span class="t" style="left:859.4px;top:351px;color:#ffffff;letter-spacing:0.47px">send</span>
<span class="t" style="left:890.4px;top:351px;color:#d8ac58;letter-spacing:0.00px">(</span>
<span class="t" style="left:894.4px;top:351px;color:#7080a8;letter-spacing:0.93px">$user-</span>
<span class="t" style="left:935.6px;top:351px;color:#d8ac58;letter-spacing:0.00px">&gt;</span>
<span class="t" style="left:942.4px;top:351px;color:#8890b0;letter-spacing:0.14px">socket</span>
<span class="t" style="left:979.9px;top:351px;color:#f0e8b0;letter-spacing:0.00px">,</span>
<span class="t" style="left:984.1px;top:351px;color:#8ca858;letter-spacing:0.35px">&quot;I am older than time itself&quot;</span>
<span class="t" style="left:1142.9px;top:351px;color:#f0e8b0;letter-spacing:0.00px">)</span>
<span class="t" style="left:1148.9px;top:351px;color:#ffffff;letter-spacing:0.00px">;</span>
<span class="t" style="left:1173.1px;top:351px;color:#c8a860;letter-spacing:0.40px">break</span>
<span class="t" style="left:1206.4px;top:351px;color:#ffffff;letter-spacing:0.00px">;</span>
<span class="t" style="left:740.4px;top:366px;color:#c8a860;letter-spacing:-0.10px">case</span>
<span class="t" style="left:769.1px;top:366px;color:#8ca858;letter-spacing:0.35px">&quot;date&quot;</span>
<span class="t" style="left:811.4px;top:366px;color:#f0e8b0;letter-spacing:0.00px">:</span>
<span class="t" style="left:817.4px;top:366px;color:#7080a8;letter-spacing:0.99px">$this-</span>
<span class="t" style="left:854.6px;top:366px;color:#d8ac58;letter-spacing:0.00px">&gt;</span>
<span class="t" style="left:861.9px;top:366px;color:#ffffff;letter-spacing:0.47px">send</span>
<span class="t" style="left:892.9px;top:366px;color:#d8ac58;letter-spacing:0.00px">(</span>
<span class="t" style="left:896.9px;top:366px;color:#7080a8;letter-spacing:0.93px">$user-</span>
<span class="t" style="left:938.1px;top:366px;color:#d8ac58;letter-spacing:0.00px">&gt;</span>
<span class="t" style="left:944.9px;top:366px;color:#8890b0;letter-spacing:0.14px">socket</span>
<span class="t" style="left:982.4px;top:366px;color:#f0e8b0;letter-spacing:0.00px">,</span>
<span class="t" style="left:986.4px;top:366px;color:#8ca858;letter-spacing:0.21px">&quot;today is &quot;</span>
<span class="t" style="left:1044.4px;top:366px;color:#ffffff;letter-spacing:0.00px">.</span>
<span class="t" style="left:1046.9px;top:366px;color:#e8d890;letter-spacing:1.29px">date</span>
<span class="t" style="left:1077.6px;top:366px;color:#f0e8b0;letter-spacing:0.00px">(</span>
<span class="t" style="left:1081.9px;top:366px;color:#8ca858;letter-spacing:0.42px">&quot;Y.m.d&quot;</span>
<span class="t" style="left:1126.9px;top:366px;color:#f0e8b0;letter-spacing:0.59px">))</span>
<span class="t" style="left:1138.4px;top:366px;color:#ffffff;letter-spacing:0.00px">;</span>
<span class="t" style="left:1174.9px;top:366px;color:#c8a860;letter-spacing:0.58px">break</span>
<span class="t" style="left:1209.1px;top:366px;color:#ffffff;letter-spacing:0.00px">;</span>
<span class="t" style="left:740.4px;top:381px;color:#c8a860;letter-spacing:-0.10px">case</span>
<span class="t" style="left:769.1px;top:381px;color:#8ca858;letter-spacing:0.47px">&quot;time&quot;</span>
<span class="t" style="left:811.4px;top:381px;color:#f0e8b0;letter-spacing:0.00px">:</span>
<span class="t" style="left:817.4px;top:381px;color:#7080a8;letter-spacing:0.99px">$this-</span>
<span class="t" style="left:854.6px;top:381px;color:#d8ac58;letter-spacing:0.00px">&gt;</span>
<span class="t" style="left:861.9px;top:381px;color:#ffffff;letter-spacing:0.47px">send</span>
<span class="t" style="left:892.9px;top:381px;color:#d8ac58;letter-spacing:0.00px">(</span>
<span class="t" style="left:896.9px;top:381px;color:#7080a8;letter-spacing:0.93px">$user-</span>
<span class="t" style="left:938.1px;top:381px;color:#d8ac58;letter-spacing:0.00px">&gt;</span>
<span class="t" style="left:944.9px;top:381px;color:#8890b0;letter-spacing:0.14px">socket</span>
<span class="t" style="left:982.4px;top:381px;color:#f0e8b0;letter-spacing:0.00px">,</span>
<span class="t" style="left:987.4px;top:381px;color:#8ca858;letter-spacing:0.23px">&quot;server time is &quot;</span>
<span class="t" style="left:1077.9px;top:381px;color:#ffffff;letter-spacing:0.00px">.</span>
<span class="t" style="left:1080.4px;top:381px;color:#e8d890;letter-spacing:0.91px">date</span>
<span class="t" style="left:1109.4px;top:381px;color:#f0e8b0;letter-spacing:0.00px">(</span>
<span class="t" style="left:1113.9px;top:381px;color:#8ca858;letter-spacing:0.45px">&quot;H:i:s&quot;</span>
<span class="t" style="left:1150.9px;top:381px;color:#f0e8b0;letter-spacing:0.59px">))</span>
<span class="t" style="left:1161.4px;top:381px;color:#ffffff;letter-spacing:0.00px">;</span>
<span class="t" style="left:1179.4px;top:381px;color:#c8a860;letter-spacing:0.54px">break</span>
<span class="t" style="left:1213.4px;top:381px;color:#ffffff;letter-spacing:0.00px">;</span>
<span class="t" style="left:740.4px;top:396px;color:#c8a860;letter-spacing:-0.10px">case</span>
<span class="t" style="left:769.1px;top:396px;color:#8ca858;letter-spacing:0.04px">&quot;thanks&quot;</span>
<span class="t" style="left:817.4px;top:396px;color:#f0e8b0;letter-spacing:0.00px">:</span>
<span class="t" style="left:824.1px;top:396px;color:#7080a8;letter-spacing:0.99px">$this-</span>
<span class="t" style="left:861.3px;top:396px;color:#d8ac58;letter-spacing:0.00px">&gt;</span>
<span class="t" style="left:868.6px;top:396px;color:#ffffff;letter-spacing:0.47px">send</span>
<span class="t" style="left:899.6px;top:396px;color:#d8ac58;letter-spacing:0.00px">(</span>
<span class="t" style="left:903.6px;top:396px;color:#7080a8;letter-spacing:0.93px">$user-</span>
<span class="t" style="left:944.8px;top:396px;color:#d8ac58;letter-spacing:0.00px">&gt;</span>
<span class="t" style="left:951.6px;top:396px;color:#8890b0;letter-spacing:0.14px">socket</span>
<span class="t" style="left:989.1px;top:396px;color:#f0e8b0;letter-spacing:0.00px">,</span>
<span class="t" style="left:994.4px;top:396px;color:#8ca858;letter-spacing:0.59px">&quot;you&#x27;re welcome&quot;</span>
<span class="t" style="left:1098.9px;top:396px;color:#f0e8b0;letter-spacing:0.00px">)</span>
<span class="t" style="left:1104.1px;top:396px;color:#ffffff;letter-spacing:0.00px">;</span>
<span class="t" style="left:1166.9px;top:396px;color:#c8a860;letter-spacing:0.54px">break</span>
<span class="t" style="left:1200.9px;top:396px;color:#ffffff;letter-spacing:0.00px">;</span>
<span class="t" style="left:740.4px;top:411px;color:#c8a860;letter-spacing:-0.10px">case</span>
<span class="t" style="left:769.1px;top:411px;color:#8ca858;letter-spacing:0.15px">&quot;bye&quot;</span>
<span class="t" style="left:809.1px;top:411px;color:#f0e8b0;letter-spacing:0.00px">:</span>
<span class="t" style="left:814.9px;top:411px;color:#7080a8;letter-spacing:0.99px">$this-</span>
<span class="t" style="left:852.1px;top:411px;color:#d8ac58;letter-spacing:0.00px">&gt;</span>
<span class="t" style="left:859.4px;top:411px;color:#ffffff;letter-spacing:0.47px">send</span>
<span class="t" style="left:890.4px;top:411px;color:#d8ac58;letter-spacing:0.00px">(</span>
<span class="t" style="left:894.4px;top:411px;color:#7080a8;letter-spacing:0.93px">$user-</span>
<span class="t" style="left:935.6px;top:411px;color:#d8ac58;letter-spacing:0.00px">&gt;</span>
<span class="t" style="left:942.4px;top:411px;color:#8890b0;letter-spacing:0.14px">socket</span>
<span class="t" style="left:979.9px;top:411px;color:#f0e8b0;letter-spacing:0.00px">,</span>
<span class="t" style="left:986.4px;top:411px;color:#8ca858;letter-spacing:-0.01px">&quot;bye&quot;</span>
<span class="t" style="left:1015.4px;top:411px;color:#f0e8b0;letter-spacing:0.00px">)</span>
<span class="t" style="left:1021.4px;top:411px;color:#ffffff;letter-spacing:0.00px">;</span>
<span class="t" style="left:1118.1px;top:411px;color:#c8a860;letter-spacing:0.40px">break</span>
<span class="t" style="left:1151.4px;top:411px;color:#ffffff;letter-spacing:0.00px">;</span>
<span class="t" style="left:740.4px;top:426px;color:#c8a860;letter-spacing:0.78px">default</span>
<span class="t" style="left:801.4px;top:426px;color:#f0e8b0;letter-spacing:0.00px">:</span>
<span class="t" style="left:807.4px;top:426px;color:#7080a8;letter-spacing:0.99px">$this-</span>
<span class="t" style="left:844.6px;top:426px;color:#d8ac58;letter-spacing:0.00px">&gt;</span>
<span class="t" style="left:851.9px;top:426px;color:#ffffff;letter-spacing:0.47px">send</span>
<span class="t" style="left:882.9px;top:426px;color:#d8ac58;letter-spacing:0.00px">(</span>
<span class="t" style="left:886.9px;top:426px;color:#7080a8;letter-spacing:0.93px">$user-</span>
<span class="t" style="left:928.1px;top:426px;color:#d8ac58;letter-spacing:0.00px">&gt;</span>
<span class="t" style="left:934.9px;top:426px;color:#8890b0;letter-spacing:0.14px">socket</span>
<span class="t" style="left:972.4px;top:426px;color:#f0e8b0;letter-spacing:0.00px">,</span>
<span class="t" style="left:977.9px;top:426px;color:#7080a8;letter-spacing:0.11px">$msg</span>
<span class="t" style="left:1009.9px;top:426px;color:#ffffff;letter-spacing:0.00px">.</span>
<span class="t" style="left:1015.4px;top:426px;color:#8ca858;letter-spacing:0.54px">&quot; not understood&quot;</span>
<span class="t" style="left:1120.4px;top:426px;color:#f0e8b0;letter-spacing:0.00px">)</span>
<span class="t" style="left:1127.9px;top:426px;color:#ffffff;letter-spacing:0.00px">;</span>
<span class="t" style="left:1173.9px;top:426px;color:#c8a860;letter-spacing:0.54px">break</span>
<span class="t" style="left:1207.9px;top:426px;color:#ffffff;letter-spacing:0.00px">;</span>
<span class="t" style="left:734.1px;top:441px;color:#f0e8b0;letter-spacing:0.00px">}</span>
<span class="t" style="left:727.9px;top:456px;color:#f0e8b0;letter-spacing:0.00px">}</span>
<span class="t" style="left:722.4px;top:471px;color:#f0e8b0;letter-spacing:0.00px">}</span>
<span class="t" style="left:722.9px;top:501px;color:#7080a8;letter-spacing:0.29px">$master</span>
<span class="t" style="left:775.4px;top:501px;color:#8c8c68;letter-spacing:0.00px">=</span>
<span class="t" style="left:786.4px;top:501px;color:#c8a860;letter-spacing:0.25px">new</span>
<span class="t" style="left:814.1px;top:501px;color:#ffffff;letter-spacing:0.45px">ChatBot</span>
<span class="t" style="left:864.9px;top:501px;color:#ffffff;letter-spacing:0.00px">(</span>
<span class="t" style="left:870.4px;top:501px;color:#7c8c50;letter-spacing:0.30px">&quot;localhost&quot;</span>
<span class="t" style="left:932.9px;top:501px;color:#ffffff;letter-spacing:0.00px">,</span>
<span class="t" style="left:936.4px;top:501px;color:#d86c40;letter-spacing:0.79px">12345</span>
<span class="t" style="left:975.4px;top:501px;color:#ffffff;letter-spacing:0.00px">)</span>
<span class="t" style="left:980.4px;top:501px;color:#ffffff;letter-spacing:0.00px">;</span>
</div></div>
<i id="redge"></i><i id="redge2"></i>
</body>
</html>
